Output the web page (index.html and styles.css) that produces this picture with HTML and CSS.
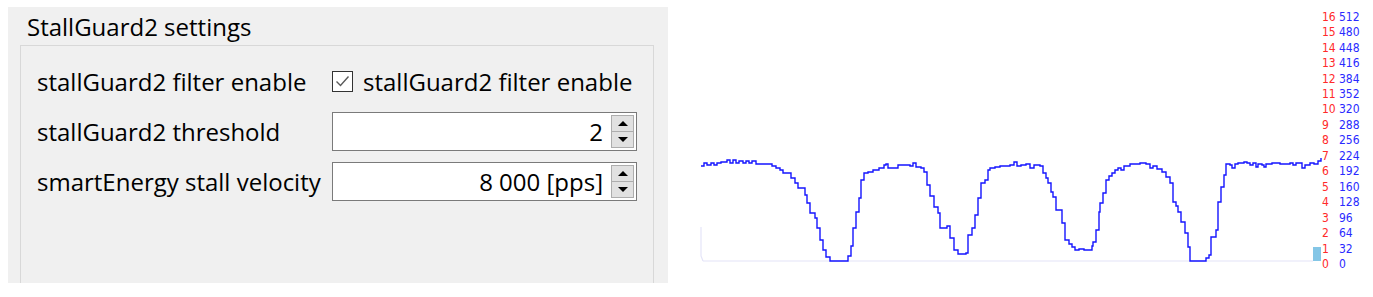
FILE: index.html
```html
<!DOCTYPE html>
<html lang="en">
<head>
    <meta charset="UTF-8">
    <meta name="viewport" content="width=device-width, initial-scale=1.0">
    <title>StallGuard2 settings</title>
    <link rel="stylesheet" href="styles.css">
</head>
<body>
    <div class="screen">
        <section class="settings-panel">
            <h2 class="group-title">StallGuard2 settings</h2>
            <div class="group-frame">
                <label class="field-label">stallGuard2 filter enable</label>
                <label class="check">
                    <span class="check-box">
                        <svg width="19" height="19" viewBox="0 0 19 19"><polyline points="3.5,9.5 7.5,13.5 15.5,4.5" fill="none" stroke="#5a5a5a" stroke-width="1.4"/></svg>
                    </span>
                    stallGuard2 filter enable
                </label>

                <label class="field-label">stallGuard2 threshold</label>
                <div class="spinbox">
                    <span class="spin-value">2</span>
                    <span class="spin-buttons">
                        <span class="spin-btn"><i class="arrow-up"></i></span>
                        <span class="spin-btn"><i class="arrow-down"></i></span>
                    </span>
                </div>

                <label class="field-label">smartEnergy stall velocity</label>
                <div class="spinbox">
                    <span class="spin-value">8 000 [pps]</span>
                    <span class="spin-buttons">
                        <span class="spin-btn"><i class="arrow-up"></i></span>
                        <span class="spin-btn"><i class="arrow-down"></i></span>
                    </span>
                </div>
            </div>
        </section>

        <section class="chart">
            <svg class="chart-svg" width="705" height="297" viewBox="668 0 705 297">
                <!-- zero line and empty trace at the left -->
                <line x1="703" y1="261" x2="1313" y2="261" stroke="#e4e4f8" stroke-width="1.2"/>
                <polyline points="701,227 701,256 703,261" fill="none" stroke="#e4e4f8" stroke-width="1.2"/>

                <!-- load value trace -->
                <path class="trace" d="M701 166 H704 V163 H707 V165 H711 V163 H714 V165 H717 V163 H721 V162 H727 V160 H730 V163 H733 V160 H736 V163 H739 V161 H743 V163 H746 V161 H749 V163 H752 V161 H756 V164 H772 V166 H776 V168 H780 V170 H783 V173 H791 V178 H795 V183 H798 V188 H805 V195 H807 V203 H810 V213 H815 V218 H817 V228 H820 V240 H823 V250 H826 V257 H830 V261 H848 V256 H851 V246 H853 V228 H856 V212 H859 V198 H861 V180 H864 V173 H868 V172 H873 V170 H879 V168 H884 V165 H886 V164 H888 V168 H898 V165 H910 V166 H913 V163 H916 V167 H921 V168 H924 V172 H927 V185 H930 V196 H934 V207 H938 V213 H940 V228 H947 V226 H950 V238 H954 V250 H958 V254 H966 V253 H968 V235 H972 V228 H975 V215 H978 V198 H981 V183 H985 V180 H988 V170 H990 V168 H995 V167 H1000 V166 H1010 V165 H1014 V162 H1017 V166 H1021 V165 H1026 V164 H1030 V168 H1034 V165 H1040 V166 H1043 V173 H1046 V178 H1048 V183 H1051 V192 H1053 V197 H1056 V210 H1062 V223 H1065 V240 H1069 V244 H1072 V247 H1075 V250 H1079 V249 H1084 V250 H1092 V246 H1093 V242 H1096 V230 H1099 V212 H1100 V203 H1103 V193 H1106 V180 H1109 V176 H1112 V173 H1115 V170 H1118 V168 H1121 V170 H1124 V166 H1130 V164 H1140 V163 H1146 V164 H1150 V168 H1153 V166 H1157 V169 H1162 V172 H1166 V177 H1170 V183 H1173 V202 H1176 V206 H1178 V212 H1181 V222 H1185 V233 H1188 V247 H1190 V261 H1206 V258 H1209 V255 H1211 V237 H1216 V230 H1218 V202 H1221 V187 H1224 V175 H1226 V164 H1230 V165 H1232 V168 H1235 V164 H1238 V163 H1244 V162 H1247 V163 H1250 V165 H1253 V163 H1256 V167 H1258 V164 H1262 V165 H1264 V167 H1266 V164 H1272 V163 H1280 V164 H1290 V163 H1293 V165 H1296 V163 H1302 V168 H1305 V165 H1310 V163 H1314 V164 H1318 V161 H1321 V158"/>

                <!-- current value bar -->
                <rect x="1313" y="247" width="8" height="14" fill="#84c6e6"/>

                <!-- axis labels -->
                <g class="axis-red">
                    <text x="1322" y="21">16</text>
                    <text x="1322" y="36">15</text>
                    <text x="1322" y="52">14</text>
                    <text x="1322" y="67">13</text>
                    <text x="1322" y="83">12</text>
                    <text x="1322" y="98">11</text>
                    <text x="1322" y="113">10</text>
                    <text x="1322" y="129">9</text>
                    <text x="1322" y="144">8</text>
                    <text x="1322" y="160">7</text>
                    <text x="1322" y="175">6</text>
                    <text x="1322" y="191">5</text>
                    <text x="1322" y="206">4</text>
                    <text x="1322" y="222">3</text>
                    <text x="1322" y="237">2</text>
                    <text x="1322" y="253">1</text>
                    <text x="1322" y="268">0</text>
                </g>
                <g class="axis-blue">
                    <text x="1339" y="21">512</text>
                    <text x="1339" y="36">480</text>
                    <text x="1339" y="52">448</text>
                    <text x="1339" y="67">416</text>
                    <text x="1339" y="83">384</text>
                    <text x="1339" y="98">352</text>
                    <text x="1339" y="113">320</text>
                    <text x="1339" y="129">288</text>
                    <text x="1339" y="144">256</text>
                    <text x="1339" y="160">224</text>
                    <text x="1339" y="175">192</text>
                    <text x="1339" y="191">160</text>
                    <text x="1339" y="206">128</text>
                    <text x="1339" y="222">96</text>
                    <text x="1339" y="237">64</text>
                    <text x="1339" y="253">32</text>
                    <text x="1339" y="268">0</text>
                </g>
            </svg>
        </section>
    </div>
</body>
</html>
```

FILE: styles.css
```css
* {
    margin: 0;
    padding: 0;
    box-sizing: border-box;
}

body {
    font-family: 'Open Sans', 'Noto Sans', 'DejaVu Sans', sans-serif;
    background-color: #ffffff;
    color: #000000;
}

.screen {
    display: flex;
    height: 297px;
    overflow: hidden;
}

.settings-panel {
    display: flex;
    flex-direction: column;
    width: 660px;
    height: 276px;
    margin: 7px 0 0 8px;
    padding: 0 14px 0 12px;
    background-color: #f0f0f0;
}

.group-title {
    font-size: 24px;
    font-weight: normal;
    line-height: 36px;
    padding: 2px 0 0 7px;
}

.group-frame {
    flex-grow: 1;
    display: grid;
    grid-template-columns: 295px 1fr;
    grid-auto-rows: 39px;
    row-gap: 11px;
    align-content: start;
    padding: 16px 16px 0;
    border: 1px solid #d8d8d8;
    border-bottom: none;
}

.field-label,
.check {
    font-size: 24px;
    align-self: center;
    white-space: nowrap;
}

.check {
    display: flex;
    align-items: center;
    gap: 10px;
}

.check-box {
    display: flex;
    width: 21px;
    height: 21px;
    border: 1px solid #333333;
    background-color: #ffffff;
}

.spinbox {
    display: flex;
    border: 1px solid #7a7a7a;
    background-color: #ffffff;
}

.spin-value {
    flex-grow: 1;
    text-align: right;
    font-size: 24px;
    line-height: 37px;
    padding-right: 8px;
}

.spin-buttons {
    display: flex;
    flex-direction: column;
    width: 23px;
    margin: 2px 2px 2px 0;
    border: 1px solid #adadad;
    background-color: #e1e1e1;
}

.spin-btn {
    flex: 1;
    display: flex;
    align-items: center;
    justify-content: center;
}

.spin-btn + .spin-btn {
    border-top: 1px solid #adadad;
}

.arrow-up,
.arrow-down {
    width: 0;
    height: 0;
    border-left: 5px solid transparent;
    border-right: 5px solid transparent;
}

.arrow-up {
    border-bottom: 5px solid #000000;
}

.arrow-down {
    border-top: 5px solid #000000;
}

.chart {
    flex-grow: 1;
}

.chart-svg {
    display: block;
}

.trace {
    fill: none;
    stroke: #1414ff;
    stroke-width: 1.4;
}

.axis-red,
.axis-blue {
    font-family: 'Liberation Sans Narrow', 'DejaVu Sans Condensed', sans-serif;
    font-size: 12px;
}

.axis-red {
    fill: #ff2a2a;
}

.axis-blue {
    fill: #2a2aff;
}
```
